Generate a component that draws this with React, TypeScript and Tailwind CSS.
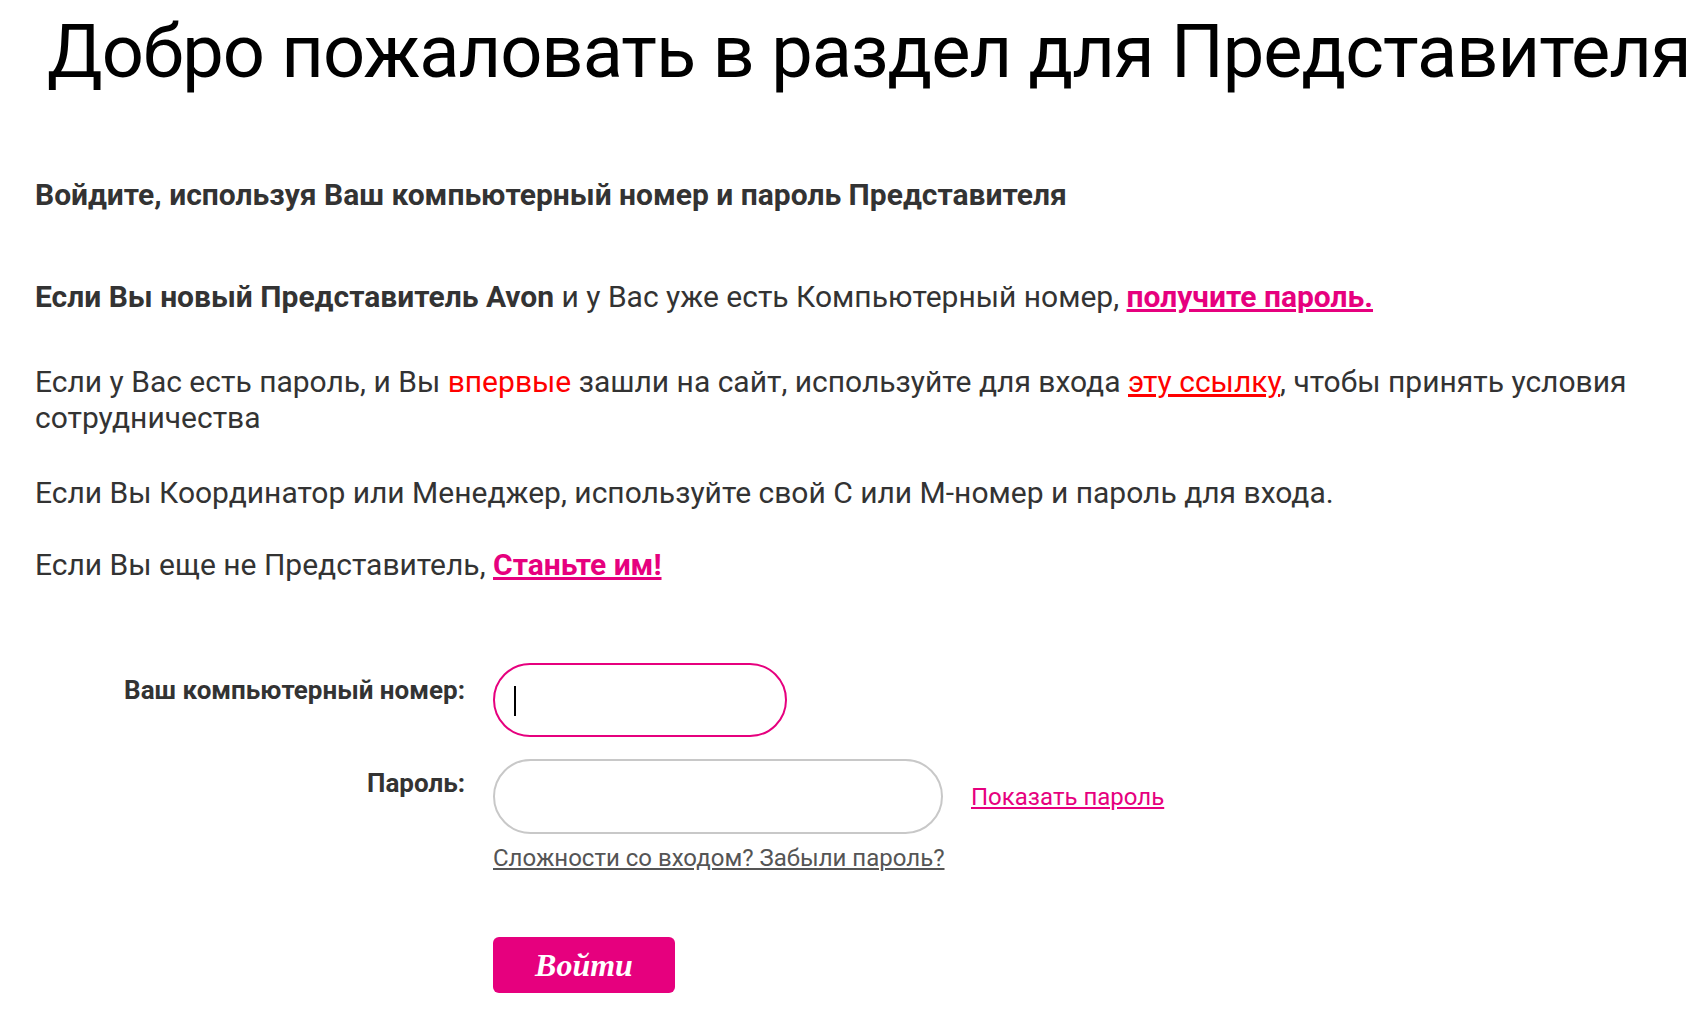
import { useState } from "react";

export default function App() {
  const [num, setNum] = useState("");
  const [pass, setPass] = useState("");

  return (
    <div className="min-h-screen bg-white text-[#333333] font-['Roboto','Liberation_Sans',sans-serif]">
      <h1 className="pt-[8px] pl-[47px] text-[74px] leading-[87px] tracking-[-1px] font-normal text-black whitespace-nowrap">
        Добро пожаловать в раздел для Представителя
      </h1>

      <div className="px-[35px]">
        <p className="mt-[82px] text-[30px] leading-[36px] font-bold">
          Войдите, используя Ваш компьютерный номер и пароль Представителя
        </p>

        <p className="mt-[66px] text-[30px] leading-[36px]">
          <b className="font-bold">Если Вы новый Представитель Avon</b> и у Вас уже есть Компьютерный номер,{" "}
          <a href="#" className="font-bold text-[#e6007e] underline">
            получите пароль.
          </a>
        </p>

        <p className="mt-[49px] text-[30px] leading-[36px]">
          Если у Вас есть пароль, и Вы <span className="text-[#ff0000]">впервые</span> зашли на сайт, используйте для входа{" "}
          <a href="#" className="text-[#ff0000] underline">
            эту ссылку
          </a>
          , чтобы принять условия сотрудничества
        </p>

        <p className="mt-[39px] text-[30px] leading-[36px]">
          Если Вы Координатор или Менеджер, используйте свой С или М-номер и пароль для входа.
        </p>

        <p className="mt-[36px] text-[30px] leading-[36px]">
          Если Вы еще не Представитель,{" "}
          <a href="#" className="font-bold text-[#e6007e] underline">
            Станьте им!
          </a>
        </p>

        <div className="mt-[80px] grid grid-cols-[430px_1fr] gap-x-[28px]">
          <label className="pt-[14px] text-right text-[26px] leading-[26px] font-bold">
            Ваш компьютерный номер:
          </label>
          <div className="relative w-[294px]">
            <input
              value={num}
              onChange={(e) => setNum(e.target.value)}
              className="h-[74px] w-[294px] rounded-full border-2 border-[#e6007e] bg-white px-[22px] text-[26px] outline-none"
            />
            {num === "" && (
              <span className="pointer-events-none absolute left-[21px] top-[23px] h-[30px] w-[2px] bg-black" />
            )}
          </div>

          <label className="mt-[22px] pt-[11px] text-right text-[26px] leading-[26px] font-bold">
            Пароль:
          </label>
          <div className="mt-[22px] flex items-center">
            <input
              type="password"
              value={pass}
              onChange={(e) => setPass(e.target.value)}
              className="h-[75px] w-[450px] rounded-full border-2 border-[#c8c8c8] bg-white px-[22px] text-[26px] outline-none"
            />
            <a href="#" className="ml-[28px] text-[24px] leading-[28px] text-[#e6007e] underline">
              Показать пароль
            </a>
          </div>

          <div />
          <div className="mt-[10px]">
            <a href="#" className="text-[24px] leading-[28px] text-[#555555] underline">
              Сложности со входом? Забыли пароль?
            </a>
          </div>

          <div />
          <div className="mt-[64px]">
            <button className="h-[56px] w-[182px] rounded-[6px] bg-[#e6007e] text-[32px] font-bold italic text-white font-['Liberation_Serif',serif]">
              Войти
            </button>
          </div>
        </div>
      </div>
    </div>
  );
}
